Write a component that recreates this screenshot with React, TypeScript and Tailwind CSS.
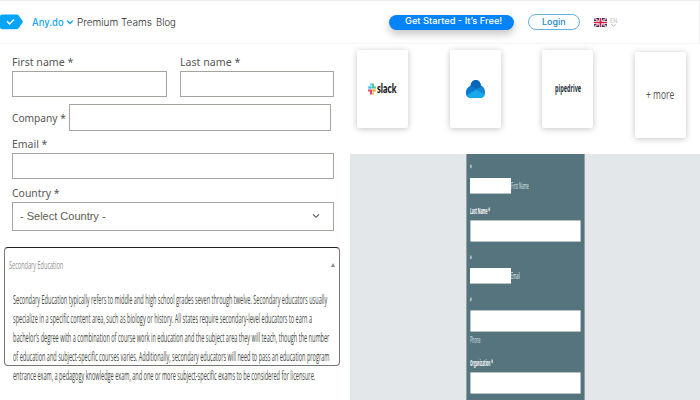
import { useLayoutEffect, useRef, type ReactNode } from "react";

/** A single line of text condensed or widened to an exact width. */
function Fit({ w, className = "", children }: { w: number; className?: string; children: ReactNode }) {
  const box = useRef<HTMLDivElement>(null);
  const text = useRef<HTMLSpanElement>(null);
  useLayoutEffect(() => {
    if (box.current && text.current) {
      box.current.style.width = `${w}px`;
      text.current.style.transform = `scaleX(${w / text.current.offsetWidth})`;
    }
  }, [w]);
  return (
    <div ref={box} className={`shrink-0 whitespace-nowrap ${className}`}>
      <span ref={text} className="inline-block origin-left">{children}</span>
    </div>
  );
}

const label = "font-['Noto_Sans',sans-serif] text-[11.5px] leading-[16px] text-[#565656]";
const field = "border border-[#a5a59f] bg-white";

function Header() {
  return (
    <header className="flex h-[44px] w-[700px] items-center border-t border-r border-b border-t-[#ededed] border-r-[#f0f0f0] border-b-[#f5f5f5] bg-white font-['Inter',sans-serif]">
      <svg className="h-[16px] w-[23px] shrink-0" viewBox="0 0 23 16">
        <path d="M2 0.5H16.5Q18 0.5 19 1.8L23 7.8L19 13.8Q18 15.2 16.5 15.2H2Q0 15.2 0 13V2.7Q0 0.5 2 0.5Z" fill="#08a4f7" />
        <path d="M7 7.3L9.6 9.9L14 5.4" fill="none" stroke="white" strokeWidth="1.4" />
      </svg>
      <Fit w={32} className="ml-[9px] text-[10px] leading-[14px] font-medium text-[#16a6ee]">Any.do</Fit>
      <svg className="ml-[3px] h-[5px] w-[6px] shrink-0" viewBox="0 0 6 5">
        <path d="M0.6 1L3 3.5L5.4 1" fill="none" stroke="#16a6ee" strokeWidth="1.4" strokeLinecap="round" />
      </svg>
      <Fit w={41} className="ml-[4px] text-[10px] leading-[14px] font-light text-[#2b2b2b]">Premium</Fit>
      <Fit w={31} className="ml-[3px] text-[10px] leading-[14px] font-light text-[#2b2b2b]">Teams</Fit>
      <Fit w={20} className="ml-[4px] text-[10px] leading-[14px] font-light text-[#2b2b2b]">Blog</Fit>
      <button className="ml-[213px] flex h-[15px] w-[125px] shrink-0 items-center justify-center rounded-full bg-[#0583fb] pr-[3px] pb-px shadow-[0_4px_9px_rgba(0,0,0,0.24)]">
        <Fit w={97} className="text-[8.5px] leading-[13px] font-medium text-white">Get Started - It’s Free!</Fit>
      </button>
      <button className="ml-[14px] flex h-[16px] w-[52px] shrink-0 items-center justify-center rounded-full border border-[#60b1e1] pr-[2px]">
        <Fit w={23} className="text-[8.5px] leading-[13px] font-medium text-[#2085c9]">Login</Fit>
      </button>
      <svg className="ml-[14px] h-[9px] w-[13px] shrink-0" viewBox="0 0 13 9">
        <path d="M0 0H13V9H0Z" fill="#27336c" />
        <path d="M0 0L13 9M13 0L0 9" stroke="#e6dce4" strokeWidth="1.8" />
        <path d="M0 0L13 9M13 0L0 9" stroke="#c54659" strokeWidth="0.6" />
        <path d="M6.5 0V9M0 4.5H13" stroke="#fff" strokeWidth="3" />
        <path d="M6.5 0V9M0 4.5H13" stroke="#d31f3c" strokeWidth="1.7" />
      </svg>
      <div className="ml-[3px] flex flex-col items-center">
        <Fit w={7} className="text-[6px] leading-[6px] text-[#bbb]">EN</Fit>
        <svg className="h-[3px] w-[5px]" viewBox="0 0 5 3"><path d="M0.5 0.5L2.5 2L4.5 0.5" fill="none" stroke="#aaa" /></svg>
      </div>
    </header>
  );
}

function ContactForm() {
  return (
    <form className="h-[203px] pt-[10px] pl-[12px]">
      <div className="flex gap-[13px]">
        <div>
          <Fit w={61} className={label}>First name *</Fit>
          <div className={`mt-px h-[26px] w-[155px] ${field}`} />
        </div>
        <div>
          <Fit w={60} className={label}>Last name *</Fit>
          <div className={`mt-px h-[26px] w-[154px] ${field}`} />
        </div>
      </div>
      <div className="mt-[7px] flex h-[27px] items-center gap-[3px]">
        <Fit w={54} className={label}>Company *</Fit>
        <div className={`h-[27px] w-[262px] ${field}`} />
      </div>
      <Fit w={35.5} className={`mt-[5px] ${label}`}>Email *</Fit>
      <div className={`mt-px h-[26px] w-[322px] ${field}`} />
      <Fit w={48} className={`mt-[6px] ${label}`}>Country *</Fit>
      <div className={`mt-px flex h-[29px] w-[322px] items-center justify-between pr-[13px] pl-[7px] ${field}`}>
        <Fit w={86} className="font-['Liberation_Sans',sans-serif] text-[11px] leading-[15px] text-[#5d5d52]">- Select Country -</Fit>
        <svg className="mb-px h-[6px] w-[8px]" viewBox="0 0 8 6"><path d="M1 1.3L4 4.3L7 1.3" fill="none" stroke="#55554f" strokeWidth="1.1" /></svg>
      </div>
    </form>
  );
}

const lines: [number, string][] = [
  [314.5, "Secondary Education typically refers to middle and high school grades seven through twelve. Secondary educators usually"],
  [299, "specialize in a specific content area, such as biology or history. All states require secondary-level educators to earn a"],
  [316.5, "bachelor’s degree with a combination of course work in education and the subject area they will teach, though the number"],
  [316.5, "of education and subject-specific courses varies. Additionally, secondary educators will need to pass an education program"],
  [302, "entrance exam, a pedagogy knowledge exam, and one or more subject-specific exams to be considered for licensure."],
];

function Education() {
  return (
    <section className="ml-[4px] h-[119px] w-[336px] rounded-[4px] border border-[#777] border-t-[#222] font-['Open_Sans',sans-serif]">
      <div className="flex items-center justify-between pt-[9px] pr-[4px] pl-[4px]">
        <Fit w={54} className="text-[11.5px] leading-[16px] text-[#8e8e8e]">Secondary Education</Fit>
        <svg className="h-[4px] w-[4px]" viewBox="0 0 4 4"><path d="M2 0L4 4H0Z" fill="#8a8a8a" /></svg>
      </div>
      <div className="pt-[17px] pl-[7.5px]">
        {lines.map(([w, t]) => (
          <Fit key={t} w={w} className="text-[12px] leading-[19px] text-[#454a44]">{t}</Fit>
        ))}
      </div>
    </section>
  );
}

const card = "flex w-[51px] shrink-0 items-center justify-center rounded-[2px] bg-white shadow-[0_1px_6px_rgba(0,0,0,0.24)]";

function Integrations() {
  return (
    <section className="flex h-[110px] items-start pt-[6px] pl-[7px]">
      <div className={`h-[78px] gap-[1px] pb-px ${card}`}>
        <svg className="h-[12px] w-[8px] shrink-0" viewBox="0 0 24 24" preserveAspectRatio="none" strokeWidth="5" strokeLinecap="round">
          <path d="M9 3V3.1M3 9H9" stroke="#36c5f0" />
          <path d="M15 3V9M21 9V9.1" stroke="#2eb67d" />
          <path d="M15 15H21M15 21V21.1" stroke="#ecb22e" />
          <path d="M9 15V21M3 15V15.1" stroke="#e01e5a" />
        </svg>
        <Fit w={19.5} className="font-['Lato',sans-serif] text-[12.5px] leading-[15px] font-black text-[#151515]">slack</Fit>
      </div>
      <div className={`ml-[42px] h-[78px] ${card}`}>
        <svg className="h-[18px] w-[19px]" viewBox="0 0 19 18">
          <defs>
            <clipPath id="cloud"><path d="M5 18C1.5 18 0 15.5 0 12.5C0 9.2 2 7 4.5 6C5 2.3 7 0 9.8 0C12.5 0 14.5 2 15 5.8C17.5 6.5 19 9 19 12C19 15.8 17.5 18 14 18Z" /></clipPath>
          </defs>
          <g clipPath="url(#cloud)">
            <path d="M0 0H19V18H0Z" fill="#1685d5" />
            <path d="M4 0H16V6L9 10L4 6Z" fill="#0866b6" />
            <path d="M0 5L5 6L11 9L0 16Z" fill="#0878d1" />
            <path d="M0 16L10 9.5L19 15V18H0Z" fill="#16a9eb" />
          </g>
        </svg>
      </div>
      <div className={`ml-[41px] h-[78px] pb-[2px] ${card}`}>
        <Fit w={26} className="font-['Open_Sans',sans-serif] text-[10px] leading-[13px] font-bold text-[#26343a]">pipedrive</Fit>
      </div>
      <div className={`mt-[2px] ml-[42px] h-[86px] pr-[2px] pb-[2px] ${card}`}>
        <Fit w={28} className="font-['Open_Sans',sans-serif] text-[13px] leading-[16px] font-medium text-[#555]">+ more</Fit>
      </div>
    </section>
  );
}

const wideInput = "h-[22px] w-[111px] rounded-[1px] border border-[#b7c2c5] bg-white";
const smallInput = "h-[16px] w-[41px] border-b border-[#b7c2c5] bg-white";
const tiny = "text-[9px] leading-[10px]";

function SignupPanel() {
  return (
    <section className="flex h-[246px] justify-center bg-[#e3e7ea]">
      <div className="h-full w-[119px] border-x border-[#91a2a8] bg-[#56747e] pl-[3px] font-['Open_Sans',sans-serif] text-white">
        <Fit w={1.5} className={`pt-[9px] font-bold ${tiny}`}>*</Fit>
        <div className="mt-[5px] flex items-center">
          <div className={smallInput} />
          <Fit w={18} className={`text-[#dbe3e5] ${tiny}`}>First Name</Fit>
        </div>
        <Fit w={20} className={`mt-[12px] font-bold ${tiny}`}>Last Name *</Fit>
        <div className={`mt-[4px] ${wideInput}`} />
        <Fit w={1.5} className={`mt-[12px] font-bold ${tiny}`}>*</Fit>
        <div className="mt-[4px] flex items-center">
          <div className={smallInput} />
          <Fit w={9} className={`text-[#e6ecee] ${tiny}`}>Email</Fit>
        </div>
        <Fit w={1.5} className={`mt-[12px] font-bold ${tiny}`}>*</Fit>
        <div className={`mt-[4px] ${wideInput}`} />
        <Fit w={10.5} className={`mt-[3px] text-[#dbe3e5] ${tiny}`}>Phone</Fit>
        <Fit w={23} className={`mt-[13px] font-bold ${tiny}`}>Organization *</Fit>
        <div className={`mt-[4px] ${wideInput}`} />
      </div>
    </section>
  );
}

export default function App() {
  return (
    <div className="h-[400px] w-[700px] overflow-hidden bg-white">
      <Header />
      <main className="flex">
        <div className="w-[350px] shrink-0">
          <ContactForm />
          <Education />
        </div>
        <div className="w-[350px] shrink-0">
          <Integrations />
          <SignupPanel />
        </div>
      </main>
    </div>
  );
}
